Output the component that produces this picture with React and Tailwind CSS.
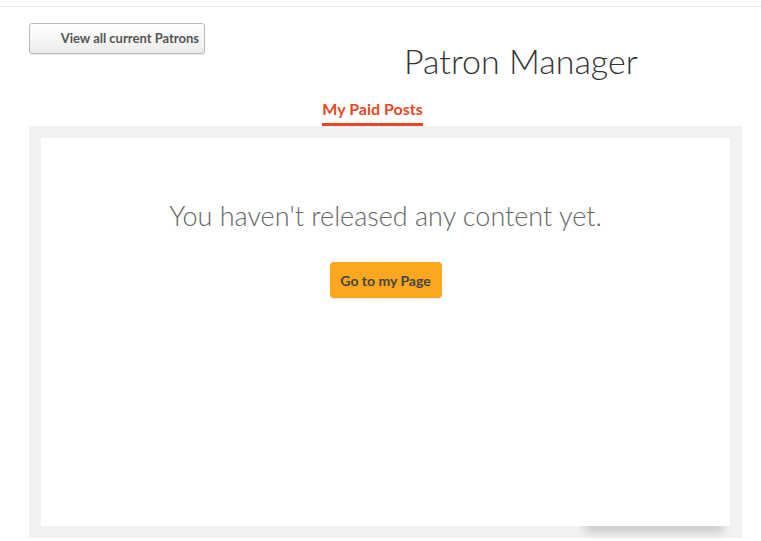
export default function App() {
  return (
    <div className="min-h-[541px] w-[761px] bg-white font-['Lato','Liberation_Sans',sans-serif]">
      <div className="h-[6px]" />
      <div className="h-px bg-[#e6e6e2]" />
      <div className="ml-[29px] w-[713px]">
        <div className="flex pt-[16px]">
          <button className="h-[31px] w-[176px] rounded-[3px] border border-[#b9b9b9] bg-gradient-to-b from-white to-[#ececec] pl-[22px] pr-[5px] text-right text-[13px] font-bold text-[#555] shadow-[0_1px_1px_rgba(0,0,0,0.08)]">
            View all current Patrons
          </button>
          <h1 className="ml-[199px] mt-[16px] text-[34px] font-light leading-[44px] text-[#333]">Patron Manager</h1>
        </div>
        <div className="mt-[16px] flex justify-center pr-[26px]">
          <div className="border-b-[3px] border-[#e8481f] pb-[4px] text-[16px] font-bold leading-[20px] text-[#e8481f]">My Paid Posts</div>
        </div>
        <div className="bg-[#f2f2f2] p-[12px]">
          <div className="relative h-[388px]">
            <div className="absolute bottom-[-6px] right-[6px] h-[9px] w-[140px] rounded-full bg-black/20 blur-[5px]" />
            <div className="relative flex h-full flex-col items-center bg-white pt-[60px]">
              <p className="text-[27px] font-light leading-[36px] text-[#666]">You haven&apos;t released any content yet.</p>
              <button className="mt-[28px] h-[36px] w-[112px] rounded-[4px] bg-[#fca71f] text-[14px] font-bold text-[#444] shadow-[0_1px_1px_rgba(0,0,0,0.1)]">
                Go to my Page
              </button>
            </div>
          </div>
        </div>
      </div>
    </div>
  );
}
